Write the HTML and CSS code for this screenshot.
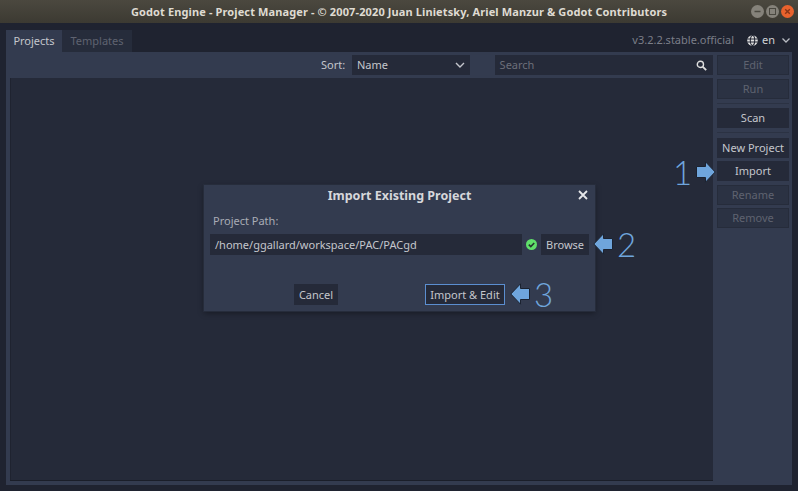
FILE: index.html
```html
<!DOCTYPE html>
<html lang="en">

<head>
    <meta charset="UTF-8">
    <title>Godot Engine - Project Manager</title>
    <link rel="stylesheet" href="styles.css">
</head>

<body>
    <header class="titlebar">
        <span class="title">Godot Engine - Project Manager - © 2007-2020 Juan Linietsky, Ariel Manzur &amp; Godot Contributors</span>
        <div class="winbtns">
            <span class="winbtn">
                <svg width="13" height="13" viewBox="0 0 13 13"><path d="M3.5 6.5h6" stroke="#4a4840" stroke-width="1.5"/></svg>
            </span>
            <span class="winbtn">
                <svg width="13" height="13" viewBox="0 0 13 13"><rect x="3.5" y="3.5" width="6" height="6" fill="none" stroke="#4a4840" stroke-width="1"/></svg>
            </span>
            <span class="winbtn winbtn-close">
                <svg width="13" height="13" viewBox="0 0 13 13"><path d="M4.2 4.2l4.6 4.6M8.8 4.2l-4.6 4.6" stroke="#8a3517" stroke-width="1.4"/></svg>
            </span>
        </div>
    </header>

    <div class="tabrow">
        <div class="tab tab-active">Projects</div>
        <div class="tab">Templates</div>
        <div class="version">v3.2.2.stable.official</div>
        <div class="lang">
            <svg width="11" height="11" viewBox="0 0 13 13" fill="none" stroke-width="1.2">
                <circle cx="6.5" cy="6.5" r="6.2" fill="#e0e0e0"/>
                <ellipse cx="6.5" cy="6.5" rx="2.6" ry="5.8" stroke="#1f2330"/>
                <path d="M0.5 4.6h12M0.5 8.4h12" stroke="#1f2330"/>
            </svg>
            <span>en</span>
            <svg class="lang-arrow" width="8" height="5" viewBox="0 0 8 5" fill="none" stroke="#b9bcc3" stroke-width="1.3"><path d="M.5.5L4 4 7.5.5"/></svg>
        </div>
    </div>

    <main class="panel">
        <div class="content">
            <div class="toolbar">
                <span class="sort-label">Sort:</span>
                <div class="select">
                    <span>Name</span>
                    <svg width="10" height="6" viewBox="0 0 10 6" fill="none" stroke="#c4c6cc" stroke-width="1.4"><path d="M1 1l4 4 4-4"/></svg>
                </div>
                <div class="search">
                    <span>Search</span>
                    <svg width="11" height="11" viewBox="0 0 12 12" fill="none" stroke="#e0e0e0"><circle cx="4.8" cy="4.8" r="3.4" stroke-width="1.5"/><path d="M7.5 7.5l3.6 3.6" stroke-width="2"/></svg>
                </div>
            </div>
            <div class="tree"></div>
        </div>

        <aside class="sidebar">
            <div class="btn btn-off">Edit</div>
            <div class="btn btn-off">Run</div>
            <div class="sep"></div>
            <div class="btn">Scan</div>
            <div class="sep"></div>
            <div class="btn">New Project</div>
            <div class="btn">Import</div>
            <div class="btn btn-off">Rename</div>
            <div class="btn btn-off">Remove</div>
        </aside>
    </main>

    <section class="dialog">
        <div class="dialog-head">
            <span>Import Existing Project</span>
            <svg class="dialog-close" width="10" height="10" viewBox="0 0 10 10" stroke="#e6e7ea" stroke-width="1.8"><path d="M1 1l8 8M9 1l-8 8"/></svg>
        </div>
        <div class="field-label">Project Path:</div>
        <div class="path-row">
            <div class="path-input">/home/ggallard/workspace/PAC/PACgd</div>
            <svg class="check" width="11" height="11" viewBox="0 0 11 11"><circle cx="5.5" cy="5.5" r="5.5" fill="#5fe06a"/><path d="M2.8 5.6l2 2 3.4-3.6" fill="none" stroke="#26352f" stroke-width="1.6"/></svg>
            <div class="btn btn-browse">Browse</div>
        </div>
        <div class="dialog-foot">
            <div class="btn btn-cancel">Cancel</div>
            <div class="btn btn-import">Import &amp; Edit</div>
        </div>
    </section>

    <div class="note note-1">
        <span>1</span>
        <svg width="20" height="22" viewBox="0 0 20 22"><path d="M.5 5.5h9V.8l9.7 10.2-9.7 10.2v-4.7h-9z" fill="#6fa5dc" stroke="#1b2230" stroke-width="1"/></svg>
    </div>
    <div class="note note-2">
        <svg width="20" height="22" viewBox="0 0 20 22"><path d="M19.5 5.5h-9V.8L.8 11l9.7 10.2v-4.7h9z" fill="#6fa5dc" stroke="#1b2230" stroke-width="1"/></svg>
        <span>2</span>
    </div>
    <div class="note note-3">
        <svg width="20" height="22" viewBox="0 0 20 22"><path d="M19.5 5.5h-9V.8L.8 11l9.7 10.2v-4.7h9z" fill="#6fa5dc" stroke="#1b2230" stroke-width="1"/></svg>
        <span>3</span>
    </div>
</body>

</html>
```

FILE: styles.css
```css
html,
body {
    margin: 0;
    height: 100%;
}

body {
    position: relative;
    width: 798px;
    height: 491px;
    overflow: hidden;
    display: flex;
    flex-direction: column;
    background-color: #1f2330;
    color: #e0e0e0;
    font-family: 'Noto Sans', sans-serif;
    font-size: 11px;
    line-height: 16px;
}

.titlebar {
    position: relative;
    height: 23px;
    flex: none;
    display: flex;
    align-items: center;
    justify-content: center;
    background: linear-gradient(#4b483f, #3c3a32);
    color: #dfdbd2;
    font-weight: 700;
    font-size: 11px;
    letter-spacing: 0.12px;
}

.winbtns {
    position: absolute;
    right: 4px;
    top: 5px;
    display: flex;
    gap: 2px;
}

.winbtn {
    width: 13px;
    height: 13px;
    border-radius: 50%;
    background-color: #85827a;
    display: flex;
}

.winbtn-close {
    background-color: #e9622d;
}

.tabrow {
    height: 29px;
    flex: none;
    display: flex;
    align-items: flex-end;
    padding: 0 8px 0 6px;
}

.tab {
    width: 70px;
    height: 22px;
    display: flex;
    align-items: center;
    justify-content: center;
    background-color: #262c3b;
    color: #5f6370;
}

.tab-active {
    width: 56px;
    background-color: #333b4f;
    color: #c4c6cc;
}

.version {
    margin-left: auto;
    height: 24px;
    display: flex;
    align-items: center;
    color: #7b7e88;
}

.lang {
    height: 24px;
    margin-left: 13px;
    display: flex;
    align-items: center;
    gap: 4px;
    color: #d0d2d6;
}

.lang-arrow {
    margin-left: 3px;
}

.panel {
    width: 786px;
    height: 433px;
    margin-left: 6px;
    box-sizing: border-box;
    padding: 3px 3px 4px 4px;
    display: flex;
    gap: 4px;
    background-color: #333b4f;
}

.content {
    width: 703px;
    display: flex;
    flex-direction: column;
    gap: 3px;
}

.toolbar {
    height: 20px;
    flex: none;
    display: flex;
    align-items: center;
}

.sort-label {
    margin-left: 311px;
    width: 31px;
    color: #c4c6cc;
}

.select {
    width: 118px;
    height: 20px;
    box-sizing: border-box;
    padding: 0 5px;
    display: flex;
    align-items: center;
    justify-content: space-between;
    background-color: #252a39;
    color: #c4c6cc;
}

.search {
    width: 219px;
    height: 20px;
    margin-left: 25px;
    box-sizing: border-box;
    padding: 0 6px 0 5px;
    display: flex;
    align-items: center;
    justify-content: space-between;
    background-color: #252a39;
    color: #6c6f7a;
}

.tree {
    flex: 1;
    background-color: #252a39;
    box-shadow: inset 0 -1px 0 #1a1e29, inset 1px 0 0 #1f2330;
}

.sidebar {
    width: 72px;
    display: flex;
    flex-direction: column;
    gap: 3.5px;
}

.btn {
    height: 20px;
    flex: none;
    display: flex;
    align-items: center;
    justify-content: center;
    background-color: #252a39;
    color: #c4c6cc;
}

.btn-off {
    background-color: #2b3243;
    color: #5f6370;
    box-shadow: inset 0 0 0 1px #262c3b;
}

.sep {
    height: 1px;
    margin: 0.75px 0;
    background-color: #2b3243;
}

.dialog {
    position: absolute;
    left: 204px;
    top: 185px;
    width: 391px;
    height: 126px;
    box-sizing: border-box;
    padding: 0 6px;
    background-color: #333b4f;
    box-shadow: 0 0 0 1px #262c3b, 0 2px 6px rgba(0, 0, 0, 0.4);
    display: flex;
    flex-direction: column;
}

.dialog-head {
    position: relative;
    height: 22px;
    display: flex;
    align-items: center;
    justify-content: center;
    font-weight: 700;
    font-size: 12.5px;
    color: #d6d7db;
}

.dialog-close {
    position: absolute;
    right: 1px;
    top: 5px;
}

.field-label {
    margin: 6px 0 0 3px;
    color: #a9acb5;
}

.path-row {
    margin-top: 5px;
    display: flex;
    align-items: center;
}

.path-input {
    width: 312px;
    height: 21px;
    box-sizing: border-box;
    padding: 0 5px;
    display: flex;
    align-items: center;
    background-color: #252a39;
    color: #c4c6cc;
}

.check {
    margin: 0 4px 0 4px;
}

.btn-browse {
    width: 48px;
    height: 21px;
}

.dialog-foot {
    position: relative;
    margin-top: 29px;
    display: flex;
}

.btn-cancel {
    width: 44px;
    height: 21px;
    margin-left: 84px;
}

.btn-import {
    width: 80px;
    height: 21px;
    margin-left: 87px;
    box-sizing: border-box;
    border: 1px solid #5b8ed0;
}

.note {
    position: absolute;
    display: flex;
    align-items: center;
    gap: 4px;
    color: #6fa5dc;
    font-family: 'Lato', sans-serif;
    font-weight: 300;
    font-size: 33px;
    line-height: 30px;
}

.note-1 {
    left: 673px;
    top: 157px;
}

.note-2 {
    left: 593px;
    top: 229px;
}

.note-3 {
    left: 510px;
    top: 279px;
}
```
